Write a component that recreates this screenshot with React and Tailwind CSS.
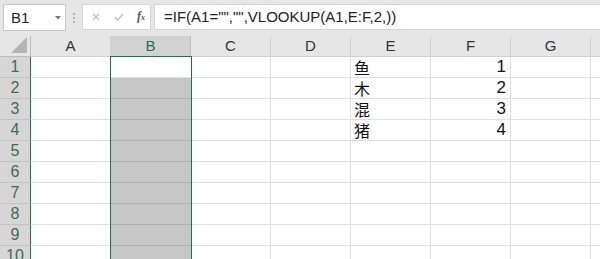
import React from "react";

const COLS = ["A", "B", "C", "D", "E", "F", "G"];
const DATA = {
  1: ["鱼", 1],
  2: ["木", 2],
  3: ["混", 3],
  4: ["猪", 4],
};

export default function App() {
  const rows = [1, 2, 3, 4, 5, 6, 7, 8, 9, 10];
  return (
    <div className="w-[600px] h-[259px] overflow-hidden bg-white" style={{ fontFamily: '"Liberation Sans", Arial, sans-serif' }}>
      {/* Formula bar */}
      <div className="h-[36px] bg-[#e6e6e6] flex items-start pt-[4px]">
        <div className="ml-[3px] w-[63px] h-[27px] bg-white border border-[#c8c8c8] flex items-center justify-between pl-[7px] pr-[4px]">
          <span className="text-[15px] leading-[20px] text-[#222]">B1</span>
          <svg width="6" height="4" viewBox="0 0 6 4"><path d="M0 0 L6 0 L3 3.5 Z" fill="#777" /></svg>
        </div>
        <div className="w-[16px] h-[27px] flex flex-col items-center justify-center gap-[2px]">
          <span className="w-[2px] h-[2px] bg-[#b8b8b8]" />
          <span className="w-[2px] h-[2px] bg-[#b8b8b8]" />
          <span className="w-[2px] h-[2px] bg-[#b8b8b8]" />
        </div>
        <div className="w-[69px] h-[26px] bg-white border border-[#d4d4d4] flex items-center">
          <svg className="ml-[9px]" width="8" height="8" viewBox="0 0 8 8"><path d="M1 1 L7 7 M7 1 L1 7" stroke="#bdbdbd" strokeWidth="1.1" /></svg>
          <svg className="ml-[14px]" width="10" height="8" viewBox="0 0 10 8"><path d="M1 4 L4 7 L9 1" stroke="#bdbdbd" strokeWidth="1.2" fill="none" /></svg>
          <span className="ml-[13px] text-[12px] leading-[16px] italic font-bold text-[#555]" style={{ fontFamily: '"Liberation Serif", serif' }}>f<span className="text-[8px]">x</span></span>
        </div>
        <div className="ml-[3px] flex-1 h-[26px] bg-white border-y border-l border-[#d4d4d4] flex items-center pl-[9px]">
          <span className="text-[15px] leading-[20px] text-[#222] whitespace-pre">=IF(A1="","",VLOOKUP(A1,E:F,2,))</span>
        </div>
      </div>

      {/* Grid */}
      <div className="relative">
        <div className="grid grid-cols-[31px_repeat(7,80px)_1fr]">
          {/* header row */}
          <div className="h-[21px] bg-[#e6e6e6] border-r border-b border-[#bdbdbd] flex items-end justify-end pr-[3px] pb-[3px]">
            <svg width="16" height="16" viewBox="0 0 16 16"><path d="M16 0 L16 16 L0 16 Z" fill="#b4b4b4" /></svg>
          </div>
          {COLS.map((c) => (
            <div
              key={c}
              className={
                c === "B"
                  ? "h-[21px] bg-[#d2d2d2] border-r border-b border-[#bdbdbd] flex items-center justify-center text-[15px] leading-[20px] text-[#217346]"
                  : "h-[21px] bg-[#e6e6e6] border-r border-b border-[#d0d0d0] flex items-center justify-center text-[15px] leading-[20px] text-[#333]"
              }
            >
              {c}
            </div>
          ))}
          <div className="h-[21px] bg-[#e6e6e6] border-b border-[#d0d0d0]" />

          {rows.map((r) => (
            <React.Fragment key={r}>
              <div className="h-[21px] bg-[#d6d6d6] border-r border-b border-r-[#217346] border-b-[#c2c2c2] flex items-center justify-center text-[16px] leading-[20px] text-[#3c6e53]">
                {r}
              </div>
              {COLS.map((c) => {
                let cls = "h-[21px] border-r border-b border-[#dfdfdf] flex items-center";
                if (c === "B") cls = r === 1 ? "h-[21px] bg-white border-b border-[#dfdfdf]" : "h-[21px] bg-[#c6c6c6] border-b border-[#b0b0b0]";
                let content = null;
                if (DATA[r] && c === "E") {
                  content = (
                    <span className="pl-[3px] text-[16px] leading-[18px] text-[#111]" style={{ fontFamily: '"Noto Sans CJK SC", sans-serif' }}>
                      {DATA[r][0]}
                    </span>
                  );
                }
                if (DATA[r] && c === "F") {
                  cls += " justify-end pr-[4px]";
                  content = <span className="text-[17px] leading-[20px] text-[#111]">{DATA[r][1]}</span>;
                }
                return (
                  <div key={c} className={cls}>
                    {content}
                  </div>
                );
              })}
              <div className="h-[21px] border-b border-[#dfdfdf]" />
            </React.Fragment>
          ))}
        </div>
        {/* selection outline over column B */}
        <div className="absolute left-[110px] top-[20px] w-[82px] h-[300px] border border-[#217346] pointer-events-none" />
      </div>
    </div>
  );
}
